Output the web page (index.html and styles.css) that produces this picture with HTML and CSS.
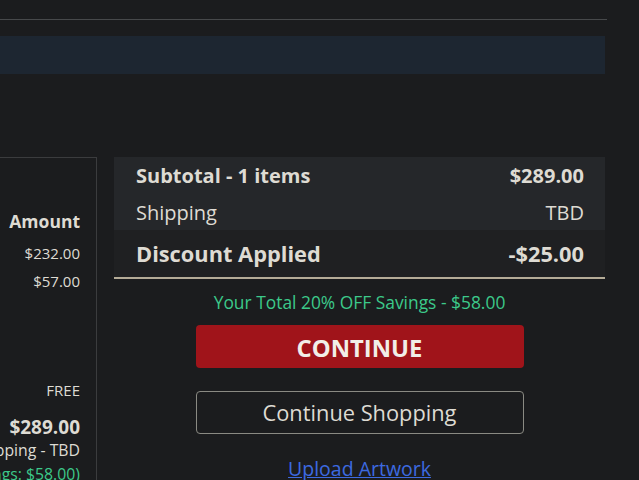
FILE: index.html
```html
<!DOCTYPE html>
<html>
<head>
<meta charset="utf-8">
<link rel="stylesheet" href="styles.css">
</head>
<body>
<div class="page">
  <div class="rule"></div>
  <div class="band"></div>
  <div class="cart">
    <div class="items">
      <div class="amt-head">Amount</div>
      <div class="amt a1">$232.00</div>
      <div class="amt a2">$57.00</div>
      <div class="amt free">FREE</div>
      <div class="amt-total">$289.00</div>
      <div class="amt ship">Shipping - TBD</div>
      <div class="amt saving">(Savings: $58.00)</div>
    </div>
    <div class="summary">
      <div class="table">
        <div class="row r1"><span class="b">Subtotal - 1 items</span><span class="b">$289.00</span></div>
        <div class="row r2"><span>Shipping</span><span>TBD</span></div>
        <div class="row r3"><span class="b big">Discount Applied</span><span class="b big">-$25.00</span></div>
      </div>
      <div class="savings">Your Total 20% OFF Savings - $58.00</div>
      <div class="actions">
        <button class="btn primary">CONTINUE</button>
        <button class="btn ghost">Continue Shopping</button>
        <a class="upload" href="#">Upload Artwork</a>
      </div>
    </div>
  </div>
</div>
</body>
</html>
```

FILE: styles.css
```css
html, body {
  margin: 0;
  padding: 0;
  background: #1b1c1e;
  font-family: "Open Sans", "Noto Sans", sans-serif;
  color: #dedbd3;
  overflow: hidden;
}
.page {
  width: 607px;
  padding-top: 19px;
}
.rule {
  height: 1px;
  background: #47494b;
}
.band {
  margin-top: 16px;
  width: 605px;
  height: 38px;
  background: #1d2631;
}
.cart {
  margin-top: 83px;
  display: flex;
  gap: 17px;
  width: 605px;
}
.items {
  width: 80px;
  padding-right: 16px;
  border-top: 1px solid #3b3c3e;
  border-right: 1px solid #3b3c3e;
  height: 330px;
  display: flex;
  flex-direction: column;
  align-items: flex-end;
  white-space: nowrap;
}
.amt-head {
  margin-top: 51px;
  font-weight: 700;
  font-size: 17.5px;
  line-height: 24px;
}
.amt {
  font-size: 15px;
  line-height: 20px;
}
.a1 { margin-top: 10px; }
.a2 { margin-top: 8px; }
.free { margin-top: 89px; }
.amt-total {
  margin-top: 15px;
  font-weight: 700;
  font-size: 19px;
  line-height: 24px;
}
.ship { margin-top: 1px; font-size: 15.8px; }
.saving { margin-top: 4px; color: #3cc98a; font-size: 15.8px; }
.summary {
  flex: 1;
  display: flex;
  flex-direction: column;
}
.table {
  border-bottom: 2px solid #b4ab97;
}
.row {
  display: flex;
  justify-content: space-between;
  align-items: center;
  padding: 0 21px 0 22px;
  font-size: 20px;
  line-height: 26px;
}
.r1 { height: 37px; padding-bottom: 3px; background: #25272a; }
.r2 { height: 31px; padding-bottom: 2px; background: #25272a; }
.r3 { height: 47px; background: #1f2022; }
.b { font-weight: 700; }
.big { font-size: 21.8px; }
.savings {
  margin-top: 11px;
  text-align: center;
  color: #3cc98a;
  font-size: 17.4px;
  line-height: 24px;
}
.actions {
  display: flex;
  flex-direction: column;
  align-items: center;
}
.btn {
  width: 328px;
  height: 43px;
  border-radius: 4px;
  font-family: "Open Sans", "Noto Sans", sans-serif;
  cursor: pointer;
  padding: 0;
}
.primary {
  margin-top: 11px;
  background: #a0141a;
  border: none;
  color: #f2eee8;
  font-weight: 700;
  font-size: 23.8px;
  padding-top: 2px;
}
.ghost {
  margin-top: 23px;
  background: transparent;
  border: 1px solid #8a8a83;
  color: #dedbd3;
  font-size: 21.8px;
}
.upload {
  margin-top: 22px;
  color: #3d6ae0;
  font-size: 19.5px;
  line-height: 26px;
}
```
